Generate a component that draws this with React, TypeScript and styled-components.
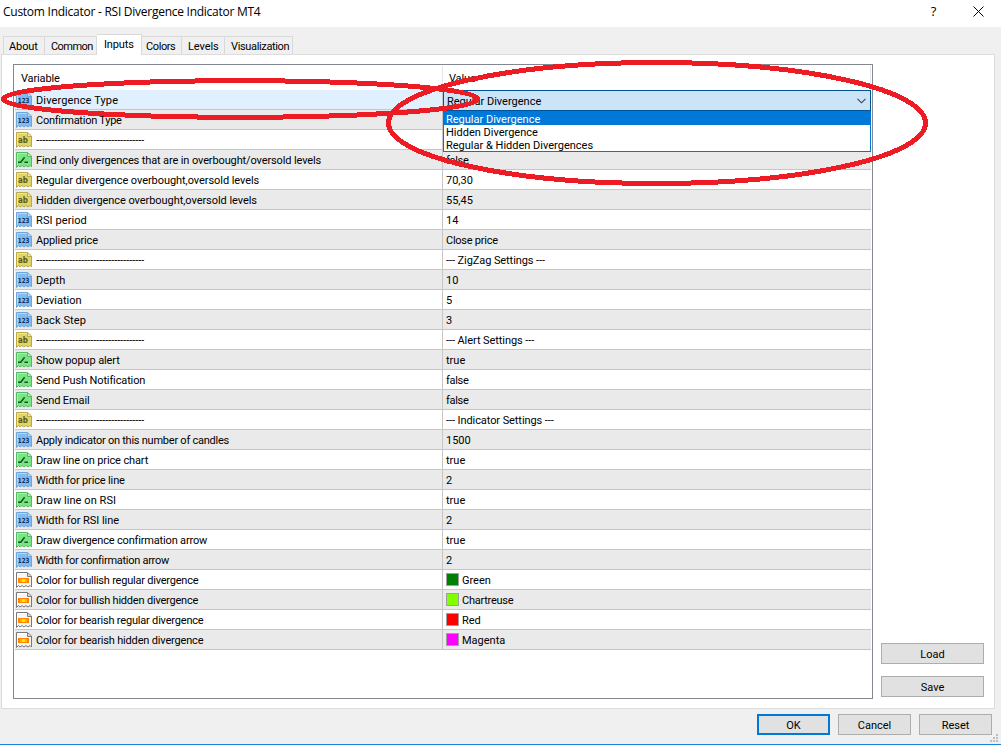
import React from "react";
import styled, { createGlobalStyle, css } from "styled-components";

const GlobalStyle = createGlobalStyle`
  *, *::before, *::after { box-sizing: border-box; }
  html, body { margin: 0; padding: 0; overflow: hidden; background: #f0f0f0; }
  button { font: inherit; letter-spacing: inherit; color: inherit; padding: 0; margin: 0; }
`;

const Window = styled.div`
  position: relative;
  width: 1001px;
  height: 745px;
  display: flex;
  flex-direction: column;
  background: #f0f0f0;
  border-bottom: 1px solid #1883d7;
  color: #000;
  font-family: Roboto, "Liberation Sans", sans-serif;
  font-size: 11px;
  white-space: pre;
`;

const Label = styled.span<{ $ls?: number; $dashed?: boolean }>`
  line-height: 20px;
  padding-top: 1px;
  letter-spacing: ${({ $ls }) => $ls ?? 0}px;
  ${({ $dashed }) =>
    $dashed &&
    css`
      padding-top: 0;
      font-family: "Liberation Sans", sans-serif;
      font-size: 10px;
      letter-spacing: -0.33px;
    `}
`;

const TitleBar = styled.header`
  height: 27px;
  flex: none;
  display: flex;
  align-items: center;
  padding: 0 17px 4px 3px;
  background: #fff;
  font-family: "Open Sans", sans-serif;
  font-size: 12px;
`;

const Title = styled.h1`
  flex: 1;
  margin: 0;
  font: inherit;
  letter-spacing: -0.26px;
`;

const CaptionButton = styled.button`
  width: 11px;
  height: 16px;
  display: flex;
  align-items: center;
  justify-content: center;
  border: 0;
  background: none;
`;

const HelpButton = styled(CaptionButton)`
  margin: -2px 34px 0 0;
  font-size: 13px;
`;

const TabStrip = styled.nav`
  height: 27px;
  flex: none;
  display: flex;
  align-items: flex-end;
  padding-left: 3px;
`;

const Tab = styled.button<{ $width: number; $pad: number; $ls: number; $active?: boolean }>`
  width: ${({ $width }) => $width}px;
  height: 18px;
  padding: 1px 0 0 ${({ $pad }) => $pad}px;
  text-align: left;
  letter-spacing: ${({ $ls }) => $ls}px;
  border: 1px solid #d9d9d9;
  border-width: 1px 1px 0 0;
  background: #f0f0f0;
  &:first-child { border-left-width: 1px; }
  ${({ $active }) =>
    $active &&
    css`
      height: 21px;
      margin-bottom: -1px;
      padding-bottom: 2px;
      z-index: 1;
      background: #fff;
    `}
`;

const TabPage = styled.main`
  height: 655px;
  flex: none;
  margin: 0 6px 0 1px;
  padding: 9px 10px 0 11px;
  display: flex;
  gap: 8px;
  background: #fff;
  border: 1px solid #dcdcdc;
`;

const ListView = styled.section`
  width: 860px;
  height: 635px;
  flex: none;
  border: 1px solid #828790;
  padding-left: 1px;
`;

const HeaderRow = styled.div`
  height: 25px;
  display: flex;
  width: 856px;
  padding-top: 1px;
`;

const HeaderCell = styled.div`
  width: 428px;
  padding-left: 6px;
  line-height: 26px;
  letter-spacing: -0.15px;
  border-right: 1px solid #e5e5e5;
`;

const Row = styled.div<{ $shade: string }>`
  position: relative;
  width: 856px;
  height: 20px;
  display: flex;
  background: ${({ $shade }) => $shade};
  border-bottom: 1px solid #c6c6c6;
`;

const NameCell = styled.div`
  width: 428px;
  display: flex;
  align-items: flex-start;
  gap: 4px;
  padding-left: 1px;
  border-right: 1px solid #c6c6c6;
`;

const ValueCell = styled.div`
  flex: 1;
  display: flex;
  align-items: flex-start;
  gap: 3px;
  padding-left: 3px;
`;

const Swatch = styled.span<{ $color: string }>`
  width: 13px;
  height: 13px;
  margin-top: 3px;
  border: 1px solid #a0a0a0;
  background: ${({ $color }) => $color};
`;

const ComboBox = styled.div`
  position: absolute;
  left: 428px;
  top: 0;
  z-index: 2;
  width: 428px;
  height: 62px;
`;

const ComboField = styled.div`
  height: 21px;
  display: flex;
  align-items: center;
  justify-content: space-between;
  padding: 1px 4px 0 3px;
  background: #cce4f7;
  border: 1px solid #005499;
`;

const ComboList = styled.div`
  height: 41px;
  background: #fff;
  border: 1px solid #0078d7;
  border-top: 0;
`;

const ComboOption = styled.div<{ $selected?: boolean }>`
  height: 13px;
  line-height: 15px;
  padding-left: 2px;
  background: ${({ $selected }) => ($selected ? "#0078d7" : "#fff")};
  color: ${({ $selected }) => ($selected ? "#fff" : "#000")};
  &:first-child { height: 14px; line-height: 17px; }
`;

const SideActions = styled.aside`
  display: flex;
  flex-direction: column;
  justify-content: flex-end;
  gap: 12px;
  padding-bottom: 11px;
`;

const Button = styled.button<{ $width: number; $primary?: boolean }>`
  width: ${({ $width }) => $width}px;
  height: 21px;
  padding-top: 2px;
  background: #e1e1e1;
  border: ${({ $primary }) => ($primary ? "2px solid #0078d7" : "1px solid #adadad")};
`;

const Footer = styled.footer`
  position: relative;
  flex: 1;
  display: flex;
  justify-content: flex-end;
  gap: 8px;
  padding: 5px 9px 0 0;
`;

const Grip = styled.svg`
  position: absolute;
  right: 3px;
  bottom: 2px;
`;

const Annotations = styled.svg`
  position: absolute;
  left: 0;
  top: 0;
  z-index: 3;
  pointer-events: none;
`;

const IconFrame = styled.svg`
  flex: none;
  margin-top: 2px;
`;

type Kind = "int" | "str" | "bool" | "color";

const paper = "M.5 .5H11.5L15.5 4V15L14 13.5L12 15L10 13.5L8 15L6 13.5L4 15L2.5 13.5L.5 15.5Z";

const tones: Record<Kind, { edge: string; fill: string; light: string; fold: string }> = {
  int: { edge: "#6ba6dc", fill: "#86bbed", light: "#b2d7f7", fold: "#c5e0f7" },
  str: { edge: "#b9aa48", fill: "#e0d368", light: "#f1e994", fold: "#f4edaa" },
  bool: { edge: "#55b963", fill: "#7be585", light: "#a4f3a9", fold: "#c3f3c6" },
  color: { edge: "#777", fill: "#f6f6f6", light: "#fff", fold: "#ddd" },
};

function KindIcon({ kind }: { kind: Kind }) {
  const t = tones[kind];
  return (
    <IconFrame width="16" height="16" viewBox="0 0 16 16">
      <path d={paper} fill={t.fill} stroke={t.edge} />
      <path d="M1.5 13V1.5H11" fill="none" stroke={t.light} />
      <path d="M11.5 1V4.5H15" fill={t.fold} stroke={t.edge} />
      {kind === "int" && (
        <text x="1.8" y="10.8" textLength="11.6" lengthAdjust="spacingAndGlyphs" fontFamily="DejaVu Sans" fontWeight="700" fontSize="7" fill="#0d3560">123</text>
      )}
      {kind === "str" && (
        <text x="2" y="11" textLength="10" lengthAdjust="spacingAndGlyphs" fontFamily="DejaVu Sans" fontWeight="700" fontSize="9" fill="#645a10">ab</text>
      )}
      {kind === "bool" && <path d="M2 10.2H4.8L8.6 5.2M8.4 10.2H12" fill="none" stroke="#0b5a18" strokeWidth="1.5" />}
      {kind === "color" && (
        <g>
          <rect x="2" y="6" width="11" height="5" fill="#ff8200" />
          <rect x="4" y="7" width="7" height="3" fill="#ffb400" />
          <rect x="6" y="7" width="3" height="3" fill="#ffe900" />
        </g>
      )}
    </IconFrame>
  );
}

interface Input {
  kind: Kind;
  name: string;
  value: string;
  color?: string;
  ls?: number;
}

const divider = "-".repeat(36);

const inputs: Input[] = [
  { kind: "int", name: "Divergence Type", value: "", ls: 0.13 },
  { kind: "int", name: "Confirmation Type", value: "", ls: -0.25 },
  { kind: "str", name: divider, value: "" },
  { kind: "bool", name: "Find only divergences that are in overbought/oversold levels", value: "false", ls: -0.12 },
  { kind: "str", name: "Regular divergence overbought,oversold levels", value: "70,30", ls: -0.06 },
  { kind: "str", name: "Hidden divergence overbought,oversold levels", value: "55,45", ls: -0.06 },
  { kind: "int", name: "RSI period", value: "14", ls: 0.1 },
  { kind: "int", name: "Applied price", value: "Close price", ls: -0.15 },
  { kind: "str", name: divider, value: "--- ZigZag Settings ---" },
  { kind: "int", name: "Depth", value: "10", ls: 0.1 },
  { kind: "int", name: "Deviation", value: "5" },
  { kind: "int", name: "Back Step", value: "3", ls: 0.1 },
  { kind: "str", name: divider, value: "--- Alert Settings ---" },
  { kind: "bool", name: "Show popup alert", value: "true", ls: -0.12 },
  { kind: "bool", name: "Send Push Notification", value: "false", ls: -0.13 },
  { kind: "bool", name: "Send Email", value: "false", ls: -0.1 },
  { kind: "str", name: divider, value: "--- Indicator Settings ---" },
  { kind: "int", name: "Apply indicator on this number of candles", value: "1500", ls: -0.24 },
  { kind: "bool", name: "Draw line on price chart", value: "true", ls: -0.12 },
  { kind: "int", name: "Width for price line", value: "2", ls: -0.15 },
  { kind: "bool", name: "Draw line on RSI", value: "true", ls: 0.06 },
  { kind: "int", name: "Width for RSI line", value: "2", ls: -0.05 },
  { kind: "bool", name: "Draw divergence confirmation arrow", value: "true", ls: -0.17 },
  { kind: "int", name: "Width for confirmation arrow", value: "2", ls: -0.28 },
  { kind: "color", name: "Color for bullish regular divergence", value: "Green", color: "#008000", ls: -0.22 },
  { kind: "color", name: "Color for bullish hidden divergence", value: "Chartreuse", color: "#7fff00", ls: -0.2 },
  { kind: "color", name: "Color for bearish regular divergence", value: "Red", color: "#ff0000", ls: -0.19 },
  { kind: "color", name: "Color for bearish hidden divergence", value: "Magenta", color: "#ff00ff", ls: -0.17 },
];

const tabs = [
  { name: "About", width: 42, pad: 5, ls: -0.1 },
  { name: "Common", width: 52, pad: 6, ls: -0.55 },
  { name: "Inputs", width: 45, pad: 7, ls: -0.15, active: true },
  { name: "Colors", width: 40, pad: 4, ls: -0.4 },
  { name: "Levels", width: 43, pad: 6, ls: -0.1 },
  { name: "Visualization", width: 68, pad: 6, ls: -0.35 },
];

const valueSpacing = (value: string) => {
  if (value.startsWith("---")) return -0.08;
  return value.length > 7 ? -0.25 : value === "false" ? -0.3 : 0;
};

const rowShade = (i: number) => (i === 0 ? "#e0f0ff" : i % 2 ? "#eaeaea" : "#fff");

export default function App() {
  return (
    <Window>
      <GlobalStyle />
      <TitleBar>
        <Title>Custom Indicator - RSI Divergence Indicator MT4</Title>
        <HelpButton>?</HelpButton>
        <CaptionButton>
          <svg width="11" height="11" viewBox="0 0 11 11">
            <path d="M.5 .5L10.5 10.5M10.5 .5L.5 10.5" stroke="#000" />
          </svg>
        </CaptionButton>
      </TitleBar>
      <TabStrip>
        {tabs.map((t) => (
          <Tab key={t.name} $width={t.width} $pad={t.pad} $ls={t.ls} $active={t.active}>
            {t.name}
          </Tab>
        ))}
      </TabStrip>
      <TabPage>
        <ListView>
          <HeaderRow>
            <HeaderCell>Variable</HeaderCell>
            <HeaderCell>Value</HeaderCell>
          </HeaderRow>
          {inputs.map((input, i) => (
            <Row key={i} $shade={rowShade(i)}>
              <NameCell>
                <KindIcon kind={input.kind} />
                <Label $ls={input.ls} $dashed={input.name === divider}>
                  {input.name}
                </Label>
              </NameCell>
              <ValueCell>
                {input.color && <Swatch $color={input.color} />}
                <Label $ls={valueSpacing(input.value)}>{input.value}</Label>
              </ValueCell>
              {i === 0 && (
                <ComboBox>
                  <ComboField>
                    Regular Divergence
                    <svg width="9" height="6" viewBox="0 0 9 6">
                      <path d="M.5 .8L4.5 4.8L8.5 .8" fill="none" stroke="#404040" strokeWidth="1.1" />
                    </svg>
                  </ComboField>
                  <ComboList>
                    <ComboOption $selected>Regular Divergence</ComboOption>
                    <ComboOption>Hidden Divergence</ComboOption>
                    <ComboOption>Regular &amp; Hidden Divergences</ComboOption>
                  </ComboList>
                </ComboBox>
              )}
            </Row>
          ))}
        </ListView>
        <SideActions>
          <Button $width={103}>Load</Button>
          <Button $width={103}>Save</Button>
        </SideActions>
      </TabPage>
      <Footer>
        <Button $width={73} $primary>OK</Button>
        <Button $width={73}>Cancel</Button>
        <Button $width={73}>Reset</Button>
        <Grip width="8" height="8" viewBox="0 0 8 8" fill="#bfbfbf">
          <path d="M6 0h2v2H6zM3 3h2v2H3zM6 3h2v2H6zM0 6h2v2H0zM3 6h2v2H3zM6 6h2v2H6z" />
        </Grip>
      </Footer>
      <Annotations width="1001" height="745" fill="none" stroke="#ed1c24" strokeWidth="5" shapeRendering="crispEdges">
        <ellipse cx="240.5" cy="99" rx="237.5" ry="18.3" />
        <ellipse cx="657" cy="123" rx="268.5" ry="60.5" />
      </Annotations>
    </Window>
  );
}
